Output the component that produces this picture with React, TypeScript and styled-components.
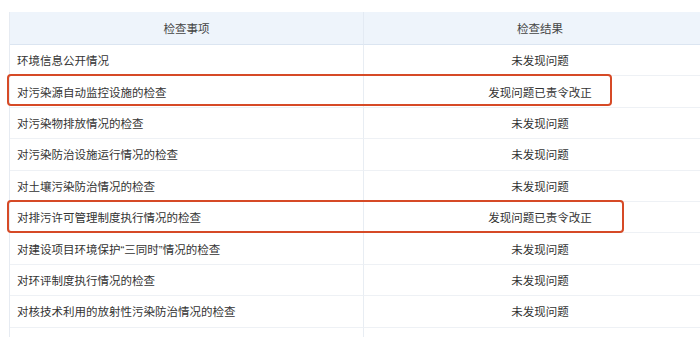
import React from "react";
import styled, { createGlobalStyle } from "styled-components";

const Global = createGlobalStyle`
  html, body { margin: 0; padding: 0; background: #fff; overflow: hidden; }
  body { font-family: "Liberation Sans", "Noto Sans CJK SC", sans-serif; }
`;

const Page = styled.div`
  width: 700px;
  height: 337px;
  overflow: hidden;
  padding: 12px 0 0 9px;
  box-sizing: border-box;
`;

const TableWrap = styled.div`
  position: relative;
  width: 706px;
`;

const Grid = styled.div`
  display: grid;
  grid-template-columns: 354px 352px;
  border-left: 1px solid #e6ebf2;
`;

const HeadCell = styled.div<{ $left?: boolean }>`
  height: 32px;
  display: flex;
  align-items: center;
  justify-content: center;
  background: #eef4fb;
  border-bottom: 1px solid #dbe5f1;
  border-right: ${(p) => (p.$left ? "1px solid #e3eaf3" : "none")};
  font-size: 11.5px;
  color: #444;
`;

const Cell = styled.div<{ $left?: boolean }>`
  height: 30.4px;
  display: flex;
  align-items: center;
  justify-content: ${(p) => (p.$left ? "flex-start" : "center")};
  padding-left: ${(p) => (p.$left ? "7px" : "0")};
  border-bottom: 1px solid #eef1f5;
  border-right: ${(p) => (p.$left ? "1px solid #e8edf3" : "none")};
  font-size: 11.5px;
  color: #333;
  white-space: nowrap;
`;

const Mark = styled.div<{ $top: number; $width: number; $height: number }>`
  position: absolute;
  left: -2px;
  top: ${(p) => p.$top}px;
  width: ${(p) => p.$width}px;
  height: ${(p) => p.$height}px;
  border: 2px solid #d64a26;
  border-radius: 4px;
  box-sizing: border-box;
  pointer-events: none;
`;

const rows: [string, string][] = [
  ["环境信息公开情况", "未发现问题"],
  ["对污染源自动监控设施的检查", "发现问题已责令改正"],
  ["对污染物排放情况的检查", "未发现问题"],
  ["对污染防治设施运行情况的检查", "未发现问题"],
  ["对土壤污染防治情况的检查", "未发现问题"],
  ["对排污许可管理制度执行情况的检查", "发现问题已责令改正"],
  ["对建设项目环境保护“三同时”情况的检查", "未发现问题"],
  ["对环评制度执行情况的检查", "未发现问题"],
  ["对核技术利用的放射性污染防治情况的检查", "未发现问题"],
  ["", ""],
];

export default function App() {
  return (
    <>
      <Global />
      <Page>
        <TableWrap>
          <Grid>
            <HeadCell $left>检查事项</HeadCell>
            <HeadCell>检查结果</HeadCell>
            {rows.map(([a, b], i) => (
              <React.Fragment key={i}>
                <Cell $left>{a}</Cell>
                <Cell>{b}</Cell>
              </React.Fragment>
            ))}
          </Grid>
          <Mark $top={62} $width={605} $height={32} />
          <Mark $top={188} $width={617} $height={33} />
        </TableWrap>
      </Page>
    </>
  );
}
